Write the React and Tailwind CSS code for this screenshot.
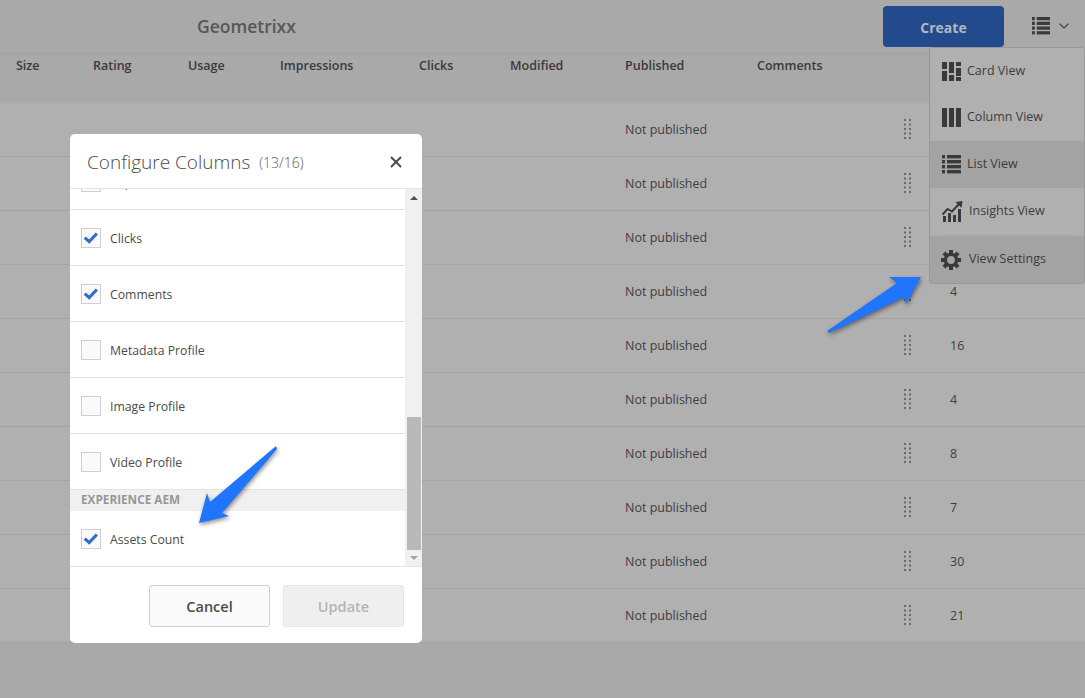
import { X, ChevronDown } from "lucide-react";

const font = "font-['Open_Sans',sans-serif]";

const columns = [
  { label: "Size", w: "w-[77px]" },
  { label: "Rating", w: "w-[95px]" },
  { label: "Usage", w: "w-[92px]" },
  { label: "Impressions", w: "w-[139px]" },
  { label: "Clicks", w: "w-[91px]" },
  { label: "Modified", w: "w-[115px]" },
  { label: "Published", w: "w-[132px]" },
  { label: "Comments", w: "w-[150px]" },
];

const rows = ["", "", "", "4", "16", "4", "8", "7", "30", "21"];

const options = [
  { label: "Impressions", checked: false },
  { label: "Clicks", checked: true },
  { label: "Comments", checked: true },
  { label: "Metadata Profile", checked: false },
  { label: "Image Profile", checked: false },
  { label: "Video Profile", checked: false },
];

const ListIcon = ({ className }) => (
  <svg viewBox="0 0 19 19" className={className} fill="currentColor">
    <rect x="0" y="0" width="3" height="3.4" />
    <rect x="5" y="0" width="14" height="3.4" />
    <rect x="0" y="5" width="3" height="3.4" />
    <rect x="5" y="5" width="14" height="3.4" />
    <rect x="0" y="10" width="3" height="3.4" />
    <rect x="5" y="10" width="14" height="3.4" />
    <rect x="0" y="15" width="3" height="3.4" />
    <rect x="5" y="15" width="14" height="3.4" />
  </svg>
);

const CardIcon = ({ className }) => (
  <svg viewBox="0 0 19 19" className={className} fill="currentColor">
    <rect x="0" y="0" width="5" height="7" />
    <rect x="0" y="9" width="5" height="10" />
    <rect x="7" y="0" width="5" height="11" />
    <rect x="7" y="13" width="5" height="6" />
    <rect x="14" y="0" width="5" height="4" />
    <rect x="14" y="6" width="5" height="8" />
    <rect x="14" y="15" width="5" height="4" />
  </svg>
);

const ColumnIcon = ({ className }) => (
  <svg viewBox="0 0 19 19" className={className} fill="currentColor">
    <rect x="0" y="0" width="5" height="19" />
    <rect x="7" y="0" width="5" height="19" />
    <rect x="14" y="0" width="5" height="19" />
  </svg>
);

const InsightsIcon = ({ className }) => (
  <svg viewBox="0 0 21 21" className={className} fill="currentColor">
    <rect x="1" y="15" width="3" height="6" />
    <rect x="6" y="12" width="3" height="9" />
    <rect x="11" y="14" width="3" height="7" />
    <rect x="16" y="8" width="3" height="13" />
    <path d="M0.5 13.5 L5.5 8 L10 10.5 L17 3" fill="none" stroke="currentColor" strokeWidth="2" />
    <path d="M13.5 1 L20.5 0 L19.5 7 Z" />
  </svg>
);

const GearIcon = ({ className }) => (
  <svg viewBox="0 0 20 20" className={className} fill="currentColor">
    <circle cx="10" cy="10" r="5.6" fill="none" stroke="currentColor" strokeWidth="3.4" />
    {[0, 45, 90, 135, 180, 225, 270, 315].map((deg) => (
      <rect key={deg} x="8" y="0" width="4" height="4" transform={`rotate(${deg} 10 10)`} />
    ))}
  </svg>
);

const DragHandle = () => (
  <svg viewBox="0 0 8 21" className="h-[21px] w-2 text-[#6a6a6a]" fill="currentColor">
    {[0, 4.5, 9, 13.5, 18].map((y) => (
      <g key={y}>
        <rect x="0" y={y} width="2" height="2" />
        <rect x="5" y={y} width="2" height="2" />
      </g>
    ))}
  </svg>
);

const Checkbox = ({ checked }) => (
  <span className="flex h-5 w-5 shrink-0 items-center justify-center border border-[#cfcfcf] bg-[#fafafa]">
    {checked && (
      <svg viewBox="0 0 20 20" className="h-5 w-5">
        <path d="M3 9.5 L8 14 L16.5 5" fill="none" stroke="#326ec8" strokeWidth="3.5" />
      </svg>
    )}
  </span>
);

const MenuItem = ({ icon, label, active, h = "h-[47px]", gap = "gap-[6px]", pl = "pl-[12px]" }) => (
  <div className={`flex items-center ${h} ${gap} ${pl} ${active ? "bg-[#a3a3a3]" : ""}`}>
    {icon}
    <span className="text-[12.5px] text-[#3c3c3c]">{label}</span>
  </div>
);

const App = () => {
  return (
    <div className={`relative h-screen w-full overflow-hidden bg-[#a9a9a9] ${font}`}>
      {/* Top bar */}
      <div className="flex h-[54px] items-center border-b border-[#a2a2a2] bg-[#a9a9a9] pb-[1px]">
        <div className="ml-[197px] pt-[1px] text-[17.5px] font-semibold text-[#575757]">Geometrixx</div>
        <button className="ml-auto flex h-[41px] w-[121px] items-center justify-center rounded-[4px] bg-[#224a8c] pt-[2px] text-[14px] font-bold text-[#b0b8c6]">
          Create
        </button>
        <div className="ml-[28px] mr-[13px] flex items-center gap-[6px] text-[#3a3a3a]">
          <ListIcon className="h-[18px] w-[18px]" />
          <ChevronDown size={16} strokeWidth={1.75} className="text-[#444444]" />
        </div>
      </div>

      {/* Column headers */}
      <div className="flex h-[49px] bg-[#a9a9a9] pl-4 pt-[3px]">
        {columns.map((col) => (
          <div key={col.label} className={`${col.w} text-[12.5px] font-semibold text-[#3a3a3a]`}>
            {col.label}
          </div>
        ))}
      </div>

      {/* Rows */}
      {rows.map((count, i) => (
        <div key={i} className="flex h-[54px] items-center border-b border-[#a3a3a3] bg-[#b0b0b0] text-[12.5px] text-[#3e3e3e]">
          <div className="ml-[625px] w-[279px] pt-[2px]">Not published</div>
          <DragHandle />
          <div className="ml-[38px] pt-[2px]">{count}</div>
        </div>
      ))}

      {/* Configure columns dialog */}
      <div className="absolute left-[70px] top-[134px] flex h-[509px] w-[352px] flex-col rounded-[5px] bg-white">
        <div className="flex h-[55px] shrink-0 items-center border-b border-[#e3e3e3] pl-[17px] pr-[17px] pt-[2px]">
          <span className="text-[19px] font-light text-[#4b4b4b]">Configure Columns</span>
          <span className="ml-[9px] text-[14px] font-light text-[#5a5a5a]">(13/16)</span>
          <X size={18} strokeWidth={2.5} className="ml-auto text-[#4b4b4b]" />
        </div>
        <div className="flex h-[378px] shrink-0 border-b border-[#e3e3e3]">
          <div className="w-[335px] overflow-hidden">
            <div className="mt-[-35px]">
              {options.map((opt) => (
                <div key={opt.label} className="flex h-[56px] items-center gap-[9px] border-b border-[#e3e3e3] pl-[11px] text-[12.25px] text-[#4b4b4b]">
                  <Checkbox checked={opt.checked} />
                  <span className="pt-[3px]">{opt.label}</span>
                </div>
              ))}
              <div className="flex h-[21px] items-center bg-[#f0f0f0] pb-[2px] pl-[11px] text-[11.75px] font-bold text-[#979797]">
                EXPERIENCE AEM
              </div>
              <div className="flex h-[56px] items-center gap-[9px] pl-[11px] text-[12.25px] text-[#4b4b4b]">
                <Checkbox checked />
                <span className="pt-[3px]">Assets Count</span>
              </div>
            </div>
          </div>
          {/* Scrollbar */}
          <div className="flex w-[17px] flex-col items-center bg-[#f0f0f0]">
            <div className="mt-[7px] h-0 w-0 border-x-[4px] border-b-[4px] border-x-transparent border-b-[#505050]" />
            <div className="mt-[217px] h-[133px] w-[14px] bg-[#b9b9b9]" />
            <div className="mt-[6px] h-0 w-0 border-x-[4px] border-t-[4px] border-x-transparent border-t-[#a3a3a3]" />
          </div>
        </div>
        <div className="flex flex-1 items-start justify-end gap-[13px] pr-[18px] pt-[18px]">
          <button className="h-[42px] w-[121px] rounded-[3px] border border-[#d0d0d0] bg-[#fafafa] pt-[2px] text-[14.5px] font-semibold text-[#4b4b4b]">
            Cancel
          </button>
          <button className="h-[42px] w-[121px] rounded-[3px] border border-[#e5e5e5] bg-[#efefef] pt-[2px] text-[14.5px] font-semibold text-[#b5b5b5]">
            Update
          </button>
        </div>
      </div>

      {/* View switcher menu */}
      <div className="absolute left-[929px] top-[47px] h-[237px] w-[156px] overflow-hidden rounded-[3px] border border-[#989898] bg-[#b0b0b0]">
        <MenuItem h="h-[46px]" icon={<CardIcon className="h-[19px] w-[19px] text-[#3a3a3a]" />} label="Card View" />
        <MenuItem icon={<ColumnIcon className="h-[19px] w-[19px] text-[#3a3a3a]" />} label="Column View" />
        <MenuItem active icon={<ListIcon className="h-[19px] w-[19px] text-[#3a3a3a]" />} label="List View" />
        <MenuItem h="h-[46px]" icon={<InsightsIcon className="h-[21px] w-[21px] text-[#3a3a3a]" />} label="Insights View" />
        <div className="mx-[11px] h-[2px] bg-[#ababab]" />
        <MenuItem active pl="pl-[11px]" gap="gap-[8px]" icon={<GearIcon className="h-[20px] w-[20px] text-[#3a3a3a]" />} label="View Settings" />
      </div>

      {/* Annotation arrows */}
      <svg viewBox="0 0 100 64" className="absolute left-[825px] top-[274px] h-[64px] w-[100px] drop-shadow-[1px_2px_2px_rgba(0,0,0,0.45)]">
        <path d="M96 3 L64 3 L72 9 L2 57 L4 59 L79 23 L81 30 Z" fill="#1f75fe" />
      </svg>
      <svg viewBox="0 0 84 84" className="absolute left-[197px] top-[444px] h-[84px] w-[84px] drop-shadow-[1px_2px_2px_rgba(0,0,0,0.45)]">
        <path d="M79 2 L80 5 L25 69 L32 72 L2 79 L10 49 L13 58 Z" fill="#1f75fe" />
      </svg>
    </div>
  );
};

export default App;
